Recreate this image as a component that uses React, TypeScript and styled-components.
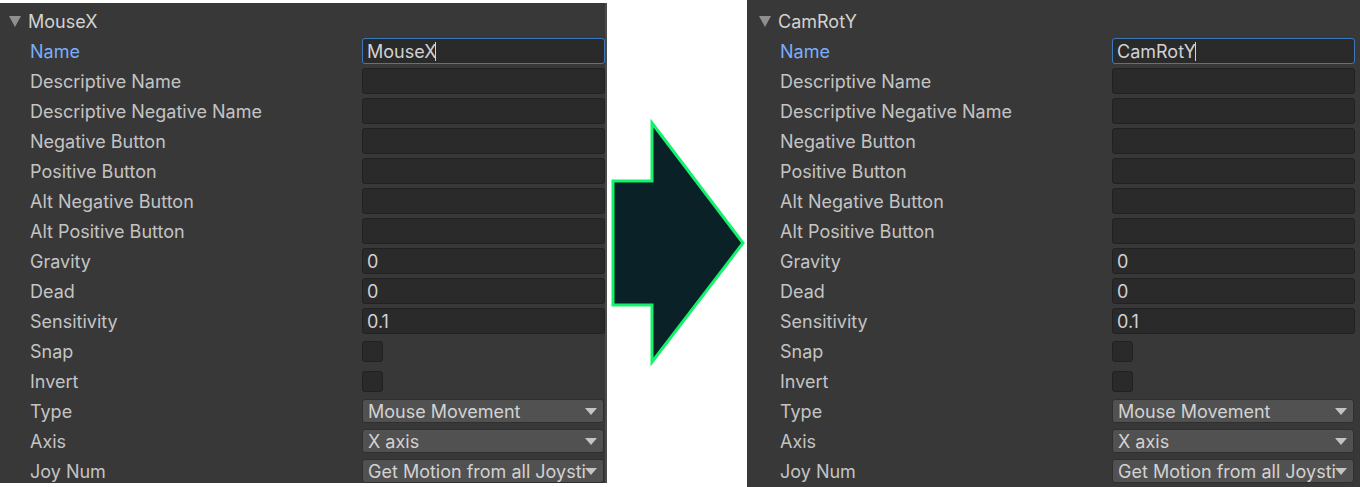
import React from "react";
import styled, { createGlobalStyle } from "styled-components";

const GlobalStyle = createGlobalStyle`
  html, body {
    margin: 0;
    padding: 0;
    background: #ffffff;
  }
  body {
    font-family: Inter, "Noto Sans", "DejaVu Sans", sans-serif;
  }
`;

type Kind = "text" | "check" | "select";

interface Field {
  label: string;
  kind: Kind;
  value?: string;
}

const fields = (name: string): Field[] => [
  { label: "Name", kind: "text", value: name },
  { label: "Descriptive Name", kind: "text" },
  { label: "Descriptive Negative Name", kind: "text" },
  { label: "Negative Button", kind: "text" },
  { label: "Positive Button", kind: "text" },
  { label: "Alt Negative Button", kind: "text" },
  { label: "Alt Positive Button", kind: "text" },
  { label: "Gravity", kind: "text", value: "0" },
  { label: "Dead", kind: "text", value: "0" },
  { label: "Sensitivity", kind: "text", value: "0.1" },
  { label: "Snap", kind: "check" },
  { label: "Invert", kind: "check" },
  { label: "Type", kind: "select", value: "Mouse Movement" },
  { label: "Axis", kind: "select", value: "X axis" },
  // the popup is too narrow for the full "Get Motion from all Joysticks"
  { label: "Joy Num", kind: "select", value: "Get Motion from all Joysti" },
];

const Page = styled.div`
  display: flex;
  align-items: flex-start;
  width: 1360px;
  height: 487px;
  overflow: hidden;
`;

const Panel = styled.div<{ $offset: number; $top: number; $pad: number; $height: number }>`
  flex: ${(p) => (p.$offset ? "1" : "0 0 607px")};
  margin-top: ${(p) => p.$top}px;
  height: ${(p) => p.$height}px;
  padding-left: ${(p) => p.$offset}px;
  padding-top: ${(p) => p.$pad}px;
  box-sizing: border-box;
  background: #383838;
  overflow: hidden;
  border-right: ${(p) => (p.$offset ? "none" : "2px solid #4b4b4b")};
`;

const Inner = styled.div`
  width: 605px;
  display: flex;
  flex-direction: column;
`;

const Row = styled.div`
  height: 30px;
  flex: 0 0 30px;
  display: flex;
  align-items: center;
  font-size: 18px;
  color: #c4c4c4;
`;

const Header = styled(Row)`
  padding-left: 9px;
  gap: 7px;
  color: #d2d2d2;
`;

const Caret = styled.span`
  width: 0;
  height: 0;
  border-left: 6px solid transparent;
  border-right: 6px solid transparent;
  border-top: 11px solid #8f8f8f;
  margin-top: 1px;
`;

const Label = styled.div<{ $active?: boolean }>`
  width: 362px;
  padding-left: 30px;
  box-sizing: border-box;
  color: ${(p) => (p.$active ? "#7baefa" : "#c4c4c4")};
  white-space: nowrap;
`;

const TextBox = styled.div<{ $focused?: boolean }>`
  width: 243px;
  height: 26px;
  box-sizing: border-box;
  border-radius: 3px;
  border: 1px solid ${(p) => (p.$focused ? "#3a79bb" : "#212121")};
  background: #2a2a2a;
  color: #d2d2d2;
  padding-left: 4px;
  display: flex;
  align-items: center;
  white-space: nowrap;
  overflow: hidden;
`;

const TextCursor = styled.span`
  display: inline-block;
  width: 1px;
  height: 19px;
  background: #d2d2d2;
  margin-left: -1px;
`;

const CheckBox = styled.div`
  width: 21px;
  height: 21px;
  box-sizing: border-box;
  border-radius: 3px;
  border: 1px solid #212121;
  background: #2a2a2a;
`;

const Select = styled.div`
  width: 242px;
  height: 24px;
  box-sizing: border-box;
  border-radius: 3px;
  border: 1px solid #2f2f2f;
  background: #515151;
  color: #d2d2d2;
  padding: 0 6px 0 5px;
  display: flex;
  align-items: center;
  white-space: nowrap;
  overflow: hidden;
`;

const SelectText = styled.span`
  flex: 1;
  overflow: hidden;
`;

const SelectArrow = styled.span`
  flex: 0 0 0;
  width: 0;
  height: 0;
  border-left: 6px solid transparent;
  border-right: 6px solid transparent;
  border-top: 7px solid #c4c4c4;
  margin-left: -1px;
`;

const Gap = styled.div`
  flex: 0 0 140px;
  height: 487px;
`;

const Arrow = () => (
  <svg width="140" height="487" viewBox="0 0 140 487">
    <polygon
      points="6,181 45,181 45,123 136,243 45,362 45,305 6,305"
      fill="#0b2128"
      stroke="#12f26a"
      strokeWidth="3"
      strokeLinejoin="miter"
    />
  </svg>
);

const Control = ({ f }: { f: Field }) => {
  if (f.kind === "check") return <CheckBox />;
  if (f.kind === "select")
    return (
      <Select>
        <SelectText>{f.value}</SelectText>
        <SelectArrow />
      </Select>
    );
  const focused = f.label === "Name";
  return (
    <TextBox $focused={focused}>
      {f.value}
      {focused && <TextCursor />}
    </TextBox>
  );
};

const AxisPanel = ({
  name,
  offset,
  top,
  pad,
  height,
}: {
  name: string;
  offset: number;
  top: number;
  pad: number;
  height: number;
}) => (
  <Panel $offset={offset} $top={top} $pad={pad} $height={height}>
    <Inner>
      <Header>
        <Caret />
        {name}
      </Header>
      {fields(name).map((f) => (
        <Row key={f.label}>
          <Label $active={f.label === "Name"}>{f.label}</Label>
          <Control f={f} />
        </Row>
      ))}
    </Inner>
  </Panel>
);

export default function App() {
  return (
    <>
      <GlobalStyle />
      <Page>
        <AxisPanel name="MouseX" offset={0} top={3} pad={3} height={480} />
        <Gap>
          <Arrow />
        </Gap>
        <AxisPanel name="CamRotY" offset={3} top={0} pad={6} height={487} />
      </Page>
    </>
  );
}
